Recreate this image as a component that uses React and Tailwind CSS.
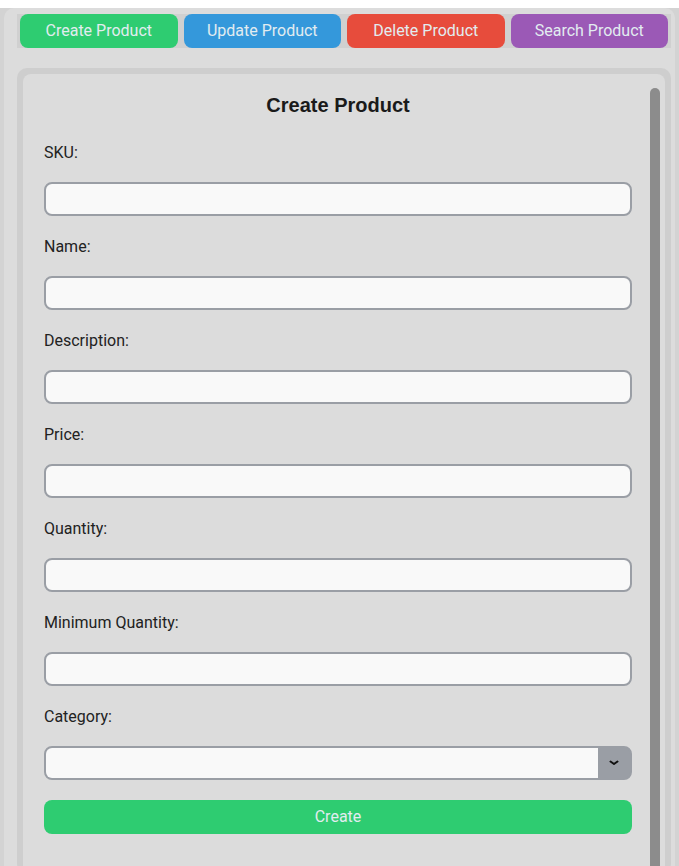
const navButtons = [
  { label: 'Create Product', color: 'bg-[#2ecc71]' },
  { label: 'Update Product', color: 'bg-[#3498db]' },
  { label: 'Delete Product', color: 'bg-[#e74c3c]' },
  { label: 'Search Product', color: 'bg-[#9b59b6]' },
];

const fields = ['SKU:', 'Name:', 'Description:', 'Price:', 'Quantity:', 'Minimum Quantity:'];

function Field({ label }) {
  return (
    <div className="flex flex-col">
      <label className="pt-[1px] text-[16px] leading-[20px] text-[#222]">{label}</label>
      <input
        type="text"
        className="mt-[19px] mb-[20px] h-[34px] w-full rounded-[8px] border-2 border-[#9a9ea5] bg-[#f9f9f9] px-2 outline-none"
      />
    </div>
  );
}

export default function App() {
  return (
    <div className="min-h-screen bg-[#d3d3d3] font-['Roboto',sans-serif]">
      <div className="mx-[4px] pt-[6px] pl-[13px] pr-[4px] mt-[8px] rounded-t-[10px] bg-[#dcdcdc] min-h-[900px]">
        <nav className="grid h-[34px] w-[654px] grid-cols-4 gap-[6px] bg-[#d0d0d0] px-[3px]">
          {navButtons.map(b => (
            <button
              key={b.label}
              className={`${b.color} h-full rounded-[8px] text-[16px] text-[#e2ecf0]`}
            >
              {b.label}
            </button>
          ))}
        </nav>

        <div className="mt-[20px] w-[654px] rounded-[10px] bg-[#cecece] p-[6px] pb-0">
          <div className="flex rounded-t-[8px] bg-[#dcdcdc] pl-[21px] pr-[5px]">
            <form className="flex-1 pt-[19px] pb-[40px]" onSubmit={e => e.preventDefault()}>
              <h2 className="mb-[25px] text-center font-['Liberation_Sans',Arial,sans-serif] text-[20px] font-bold leading-[24px] text-[#1a1a1a]">
                Create Product
              </h2>

              {fields.map(f => <Field key={f} label={f} />)}

              <div className="flex flex-col">
                <label className="pt-[1px] text-[16px] leading-[20px] text-[#222]">Category:</label>
                <div className="mt-[19px] mb-[20px] flex h-[34px] overflow-hidden rounded-[8px] border-2 border-[#9a9ea5] bg-[#9a9ea5]">
                  <div className="flex-1 bg-[#f9f9f9]" />
                  <div className="flex w-[32px] items-center justify-center">
                    <svg width="10" height="6" viewBox="0 0 10 6" fill="none">
                      <path d="M1.5 1.5 L5 4 L8.5 1.5" stroke="#111" strokeWidth="2" strokeLinecap="round" strokeLinejoin="round" />
                    </svg>
                  </div>
                </div>
              </div>

              <button
                type="submit"
                className="h-[34px] w-full rounded-[8px] bg-[#2ecc71] text-[16px] text-[#e2ecf0]"
              >
                Create
              </button>
            </form>

            <div className="ml-[18px] flex pt-[14px]">
              <div className="w-[10px] rounded-t-full bg-[#8c8c8c]" />
            </div>
          </div>
        </div>
      </div>
    </div>
  );
}
